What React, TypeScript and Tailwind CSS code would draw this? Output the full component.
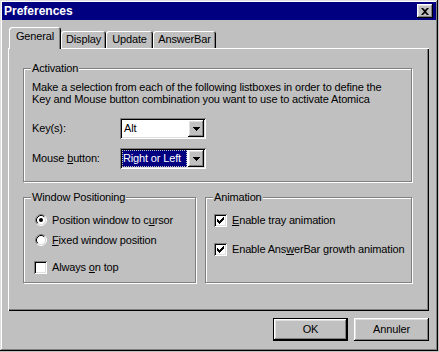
import React from "react";

const raised =
  "shadow-[inset_-1px_-1px_0_#000,inset_1px_1px_0_#fff,inset_-2px_-2px_0_#808080,inset_2px_2px_0_#dfdfdf]";
const sunken =
  "shadow-[inset_1px_1px_0_#808080,inset_-1px_-1px_0_#fff,inset_2px_2px_0_#000,inset_-2px_-2px_0_#dfdfdf]";
const etched = "border border-[#808080] shadow-[1px_1px_0_#fff,inset_1px_1px_0_#fff]";

function Arrow() {
  return (
    <div className={`w-[16px] h-[17px] shrink-0 bg-[#c0c0c0] flex items-center justify-center ${raised}`}>
      <svg width="7" height="4" viewBox="0 0 7 4">
        <path d="M0 0h7v1H6v1H5v1H4v1H3V3H2V2H1V1H0z" fill="#000" />
      </svg>
    </div>
  );
}

function Combo({ value, focused }: { value: string; focused?: boolean }) {
  return (
    <div className={`w-[86px] h-[21px] bg-white flex items-center p-[2px] ${sunken}`}>
      {focused ? (
        <div className="flex-1 h-full flex items-center pl-[1px] mr-[1px] whitespace-nowrap overflow-hidden bg-[#000080] text-white outline outline-1 outline-dotted outline-[#c0c0c0] -outline-offset-1">
          {value}
        </div>
      ) : (
        <div className="flex-1 h-full flex items-center pl-[2px] mr-[1px]">{value}</div>
      )}
      <Arrow />
    </div>
  );
}

function Radio({ checked }: { checked?: boolean }) {
  return (
    <svg width="12" height="12" viewBox="0 0 12 12" className="shrink-0">
      <circle cx="6" cy="6" r="4.5" fill="#fff" />
      <path d="M2.11 9.89A5.5 5.5 0 0 1 9.89 2.11" stroke="#808080" fill="none" />
      <path d="M9.89 2.11A5.5 5.5 0 0 1 2.11 9.89" stroke="#fff" fill="none" />
      <path d="M2.82 9.18A4.5 4.5 0 0 1 9.18 2.82" stroke="#000" fill="none" />
      <path d="M9.18 2.82A4.5 4.5 0 0 1 2.82 9.18" stroke="#dfdfdf" fill="none" />
      {checked && <circle cx="6" cy="6" r="2" fill="#000" />}
    </svg>
  );
}

function Check({ checked }: { checked?: boolean }) {
  return (
    <div className={`w-[13px] h-[13px] shrink-0 bg-white flex items-center justify-center ${sunken}`}>
      {checked && (
        <svg width="7" height="7" viewBox="0 0 7 7">
          <path d="M6 0h1v3H6v1H5v1H4v1H3v1H2V6H1V5H0V2h1v1h1v1h1V3h1V2h1V1h1z" fill="#000" />
        </svg>
      )}
    </div>
  );
}

function Group({ label, className, children }: { label: string; className: string; children: React.ReactNode }) {
  return (
    <div className={`relative ${etched} ${className}`}>
      <span className="absolute -top-[8px] left-[7px] px-[1px] bg-[#c0c0c0] leading-[14px]">{label}</span>
      {children}
    </div>
  );
}

const tabs = [
  { name: "General", w: "w-[52px]" },
  { name: "Display", w: "w-[45px]" },
  { name: "Update", w: "w-[47px]" },
  { name: "AnswerBar", w: "w-[63px]" },
];

export default function App() {
  return (
    <div className="w-[439px] h-[352px] bg-[#c0c0c0] text-[11px] tracking-[-0.15px] text-black font-['Liberation_Sans',Arial,sans-serif]">
      <div
        className={`w-[438px] h-[351px] p-[2px] flex flex-col shadow-[inset_-1px_-1px_0_#000,inset_1px_1px_0_#dfdfdf,inset_-2px_-2px_0_#808080,inset_2px_2px_0_#fff]`}
      >
        {/* title bar */}
        <div className="h-[18px] bg-[#000080] flex items-center justify-between pl-[2px] pr-[3px]">
          <span className="text-white font-bold text-[12px] tracking-normal">Preferences</span>
          <div className={`w-[16px] h-[14px] bg-[#c0c0c0] flex items-center justify-center ${raised}`}>
            <svg width="8" height="7" viewBox="0 0 8 7">
              <path d="M0 0h2l2 2 2-2h2L5 3.5 8 7H6L4 5 2 7H0l3-3.5z" fill="#000" />
            </svg>
          </div>
        </div>

        {/* tabs */}
        <div className="flex items-end h-[21px] mt-[7px] ml-[7px]">
          {tabs.map((t, i) => (
            <div
              key={t.name}
              className={`${t.w} flex items-center justify-center rounded-t-[3px] bg-[#c0c0c0] shadow-[inset_1px_1px_0_#fff,inset_-1px_0_0_#000,inset_-2px_0_0_#808080] ${
                i === 0 ? "h-[22px] -mb-[1px] relative z-10 pb-[3px]" : "h-[17px]"
              }`}
            >
              {t.name}
            </div>
          ))}
        </div>

        {/* page */}
        <div className="ml-[6px] w-[421px]">
          <div
            className={`h-[263px] pt-[20px] pl-[15px] pr-[17px] flex flex-col shadow-[inset_1px_1px_0_#fff,inset_-1px_-1px_0_#000,inset_-2px_-2px_0_#808080]`}
          >
            <Group label="Activation" className="h-[114px] pt-[12px] pl-[8px]">
              <p className="leading-[12px]">
                Make a selection from each of the following listboxes in order to define the
                <br />
                Key and Mouse button combination you want to use to activate Atomica
              </p>
              <div className="flex items-center mt-[13px]">
                <span className="w-[88px]">Key(s):</span>
                <Combo value="Alt" />
              </div>
              <div className="flex items-center mt-[9px]">
                <span className="w-[88px]">
                  Mouse <span className="underline">b</span>utton:
                </span>
                <Combo value="Right or Left" focused />
              </div>
            </Group>

            <div className="flex gap-[9px] mt-[15px]">
              <Group label="Window Positioning" className="w-[173px] h-[86px] pt-[14px] pl-[10px] flex flex-col">
                <div className="flex items-center gap-[5px] h-[16px] pl-[1px]">
                  <Radio checked />
                  <span>
                    Position window to c<span className="underline">u</span>rsor
                  </span>
                </div>
                <div className="flex items-center gap-[5px] h-[16px] mt-[4px] pl-[1px]">
                  <Radio />
                  <span>
                    <span className="underline">F</span>ixed window position
                  </span>
                </div>
                <div className="flex items-center gap-[5px] h-[16px] mt-[11px]">
                  <Check />
                  <span>
                    Always <span className="underline">o</span>n top
                  </span>
                </div>
              </Group>

              <Group label="Animation" className="w-[207px] h-[86px] pt-[14px] pl-[8px] flex flex-col">
                <div className="flex items-center gap-[5px] h-[16px]">
                  <Check checked />
                  <span>
                    <span className="underline">E</span>nable tray animation
                  </span>
                </div>
                <div className="flex items-center gap-[5px] h-[16px] mt-[13px]">
                  <Check checked />
                  <span>
                    Enable Ans<span className="underline">w</span>erBar growth animation
                  </span>
                </div>
              </Group>
            </div>
          </div>

          {/* buttons */}
          <div className="flex justify-end gap-[6px] mt-[7px]">
            <div className="w-[75px] h-[23px] border border-black">
              <div className={`w-full h-full flex items-center justify-center bg-[#c0c0c0] ${raised}`}>OK</div>
            </div>
            <div className={`w-[75px] h-[23px] flex items-center justify-center bg-[#c0c0c0] ${raised}`}>Annuler</div>
          </div>
        </div>
      </div>
    </div>
  );
}
